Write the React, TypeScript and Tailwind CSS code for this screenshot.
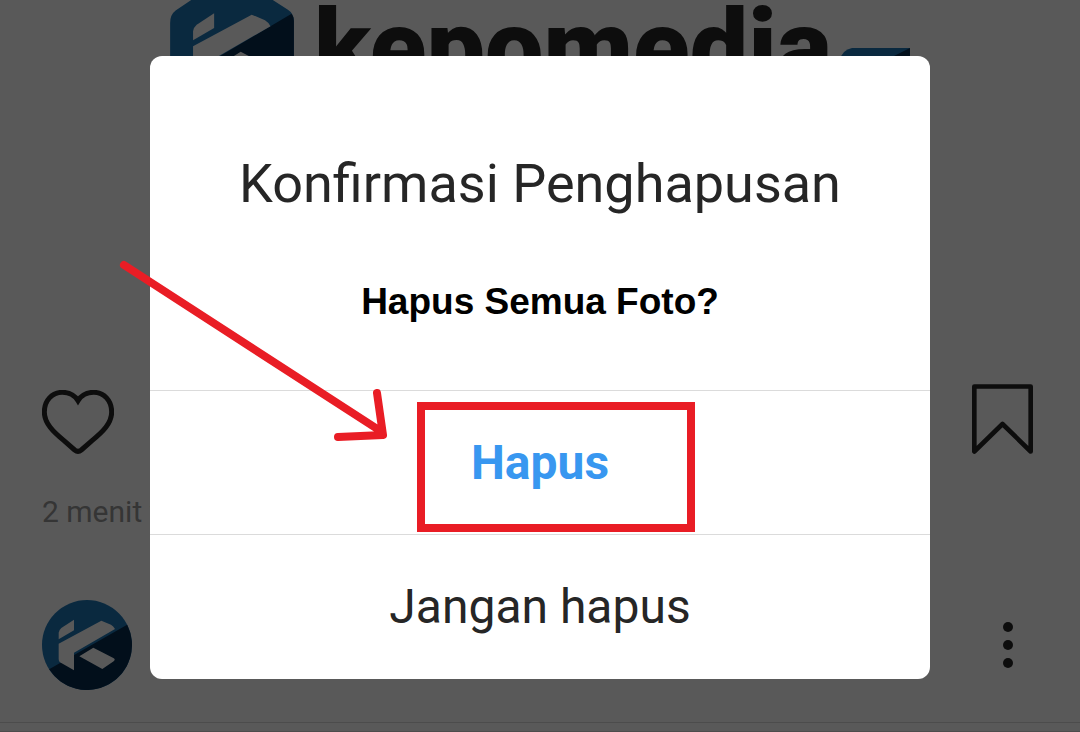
function LogoMark() {
  return (
    <g fill="#fff">
      <path d="M50 118V98Q51 90 58 84L96 59V91Z" />
      <path d="M50 131L178 62L207 74Q214 78 219 87L96 158V211L54 187Q50 184 50 177Z" />
      <path d="M112 169L154 143L214 174Q222 178 215 184L181 207Z" />
    </g>
  );
}

function BrandHeader() {
  return (
    <div className="flex h-96 items-start justify-center overflow-hidden">
      <svg viewBox="0 30 270 240" className="h-[110px] w-[124px] shrink-0" aria-hidden="true">
        <path d="M46 30H224L257 51Q270 59 270 76V210L135 300L0 210V80Q0 62 12 53Z" fill="#1d76b6" />
        <path d="M265 60Q270 66 270 76V210L135 300L0 217Z" fill="#062b4e" />
        <LogoMark />
      </svg>
      <span className="ml-5 text-[104px] leading-[95px] font-black text-[#262626]">kepomedia</span>
      <svg viewBox="0 0 70 30" className="mt-12 ml-2 h-[30px] w-[70px] shrink-0" aria-hidden="true">
        <path d="M12 0H70V30H0V12Q2 2 12 0Z" fill="#1d76b6" />
        <path d="M70 0V30H10Z" fill="#062b4e" />
      </svg>
    </div>
  );
}

function Post() {
  return (
    <main className="min-h-screen bg-white">
      <BrandHeader />

      <div className="flex items-end justify-between pr-[47px] pl-[42px]">
        <button type="button" aria-label="Suka">
          <svg viewBox="0 0 216 192" className="h-16 w-[72px]" fill="none" stroke="#262626" strokeWidth="15">
            <path d="M108 32C98 16 80 7 61 7C30 7 7 32 7 66C7 100 34 126 66 152L98 180Q108 188 118 180L150 152C182 126 209 100 209 66C209 32 186 7 155 7C136 7 118 16 108 32Z" />
          </svg>
        </button>
        <button type="button" aria-label="Simpan">
          <svg
            viewBox="0 0 184 210"
            className="h-[70px] w-[61px]"
            fill="none"
            stroke="#262626"
            strokeWidth="14"
            strokeLinejoin="round"
          >
            <path d="M7 7H177V203L92 120L7 203Z" />
          </svg>
        </button>
      </div>

      <p className="mt-[38px] px-[42px] text-[30px] leading-10 text-[#999]">2 menit yang lalu</p>

      <div className="mt-[68px] flex items-center justify-between border-b border-[#dbdbdb] pr-[67px] pb-8 pl-[42px]">
        <svg viewBox="0 0 270 270" className="size-[90px]" aria-hidden="true">
          <circle cx="135" cy="135" r="135" fill="#1d76b6" />
          <path d="M255.4 74A135 135 0 0 1 21.4 208Z" fill="#062b4e" />
          <LogoMark />
        </svg>
        <button type="button" aria-label="Opsi lainnya" className="flex flex-col gap-2">
          <span className="size-[10px] rounded-full bg-[#262626]" />
          <span className="size-[10px] rounded-full bg-[#262626]" />
          <span className="size-[10px] rounded-full bg-[#262626]" />
        </button>
      </div>
      <div className="mt-2 border-t border-[#dbdbdb]" />
    </main>
  );
}

function Annotation() {
  return (
    <>
      <svg
        viewBox="0 0 280 190"
        className="pointer-events-none absolute top-[200px] -left-10 h-[190px] w-[280px]"
        fill="none"
        stroke="#e91d25"
        strokeWidth="8"
        strokeLinecap="round"
        strokeLinejoin="round"
        aria-hidden="true"
      >
        <path d="M14 9L272 176M267 137L273 179L228 181" />
      </svg>
      <div className="pointer-events-none absolute top-[346px] left-[267px] h-[130px] w-[278px] border-8 border-[#e91d25]" />
    </>
  );
}

function ConfirmDialog() {
  return (
    <div className="fixed inset-0 flex items-start justify-center bg-black/65 px-6 pt-14">
      <div
        role="dialog"
        aria-modal="true"
        aria-labelledby="dialog-title"
        className="relative w-full max-w-[780px] rounded-xl bg-white text-center text-[#262626]"
      >
        <div className="pt-24 pb-16">
          <h1 id="dialog-title" className="text-[54px] leading-[64px]">
            Konfirmasi Penghapusan
          </h1>
          <p className="mt-[62px] font-['Liberation_Sans',Arial,sans-serif] text-[37px] leading-[48px] font-bold text-black">
            Hapus Semua Foto?
          </p>
        </div>
        <button
          type="button"
          className="block h-36 w-full border-t border-[#dbdbdb] text-5xl font-bold text-[#3897f0]"
        >
          Hapus
        </button>
        <button type="button" className="block h-[145px] w-full border-t border-[#dbdbdb] text-5xl">
          Jangan hapus
        </button>
        <Annotation />
      </div>
    </div>
  );
}

export default function App() {
  return (
    <div className="font-[Roboto,sans-serif]">
      <Post />
      <ConfirmDialog />
    </div>
  );
}
